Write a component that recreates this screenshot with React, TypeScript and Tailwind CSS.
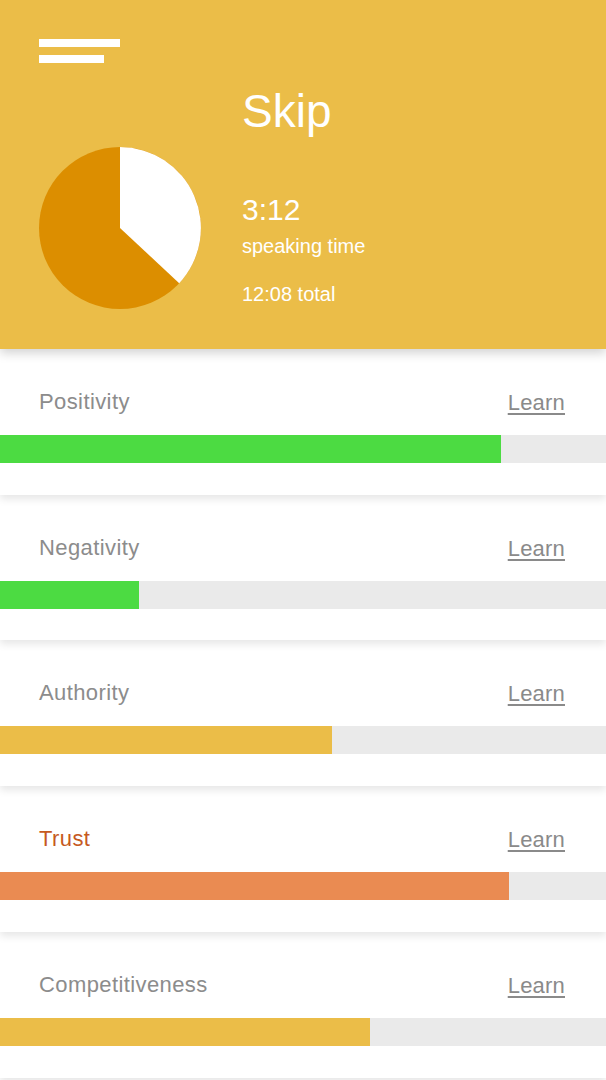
import React from "react";

const metrics = [
  { label: "Positivity", width: 501, bar: "bg-[#4cdb42]", text: "text-[#8c8c8c]", h: "h-[146px]" },
  { label: "Negativity", width: 139, bar: "bg-[#4cdb42]", text: "text-[#8c8c8c]", h: "h-[145px]" },
  { label: "Authority", width: 332, bar: "bg-[#ebbd48]", text: "text-[#8c8c8c]", h: "h-[146px]" },
  { label: "Trust", width: 509, bar: "bg-[#ea8b52]", text: "text-[#c65a1e]", h: "h-[146px]" },
  { label: "Competitiveness", width: 370, bar: "bg-[#ebbd48]", text: "text-[#8c8c8c]", h: "h-[146px]" },
];

const zLevels = ["z-40", "z-30", "z-20", "z-10", "z-0"];

const Pie = () => (
  <svg width="162" height="162" viewBox="0 0 162 162">
    <circle cx="81" cy="81" r="81" fill="#dc8e00" />
    <path d="M81 81 L81 0 A81 81 0 0 1 140.2 136.2 Z" fill="#ffffff" />
  </svg>
);

const App = () => {
  return (
    <div className="w-[606px] h-[1080px] overflow-hidden bg-white font-['Liberation_Sans',Arial,sans-serif]">
      {/* Header */}
      <header className="relative z-50 h-[349px] bg-[#ebbd48] px-[39px] pt-[39px] shadow-[0_4px_10px_rgba(0,0,0,0.18)]">
        <div className="flex flex-col gap-[8px]">
          <div className="w-[81px] h-[8px] bg-white" />
          <div className="w-[65px] h-[8px] bg-white" />
        </div>
        <div className="flex mt-[25px] gap-[41px]">
          <div className="pt-[59px]">
            <Pie />
          </div>
          <div className="flex flex-col text-white">
            <div className="text-[46px] leading-[46px]">Skip</div>
            <div className="mt-[61px] text-[30px] leading-[30px]">3:12</div>
            <div className="mt-[11px] text-[20px] leading-[20px]">speaking time</div>
            <div className="mt-[28px] text-[20px] leading-[20px]">12:08 total</div>
          </div>
        </div>
      </header>

      {/* Metric cards */}
      {metrics.map((m, i) => (
        <section
          key={m.label}
          className={`relative ${zLevels[i]} ${m.h} bg-white pt-[38px] shadow-[0_4px_8px_rgba(0,0,0,0.10)]`}
        >
          <div className="flex items-center justify-between px-[39px] pr-[41px] h-[28px]">
            <span className={`text-[22px] tracking-[0.4px] ${m.text}`}>{m.label}</span>
            <a className="text-[22px] tracking-[0.2px] text-[#8a8a8a] underline underline-offset-[3px] mt-[3px]">
              Learn
            </a>
          </div>
          <div className="mt-[20px] h-[28px] bg-[#eaeaea]">
            <div className={`h-full ${m.bar}`} style={{ width: m.width }} />
          </div>
        </section>
      ))}
    </div>
  );
};

export default App;
